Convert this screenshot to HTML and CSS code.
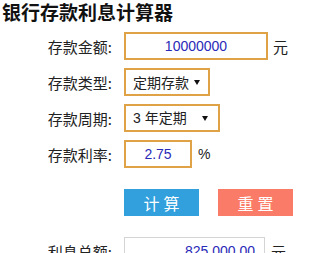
FILE: index.html
```html
<!DOCTYPE html>
<html lang="zh-CN">
<head>
<meta charset="utf-8">
<title>银行存款利息计算器</title>
<link rel="stylesheet" href="styles.css">
</head>
<body>
<div class="page">
  <h1 class="title">银行存款利息计算器</h1>
  <div class="row row-first">
    <label class="label">存款金额:</label>
    <input class="field amount" type="text" value="10000000">
    <span class="unit">元</span>
  </div>
  <div class="row">
    <label class="label">存款类型:</label>
    <div class="select type-select">
      <select><option>定期存款</option></select>
      <svg class="arrow" width="6" height="5" viewBox="0 0 6 5"><path d="M0 0H6L3 5Z"/></svg>
    </div>
  </div>
  <div class="row">
    <label class="label">存款周期:</label>
    <div class="select term-select">
      <select><option>3 年定期</option></select>
      <svg class="arrow" width="6" height="5" viewBox="0 0 6 5"><path d="M0 0H6L3 5Z"/></svg>
    </div>
  </div>
  <div class="row">
    <label class="label">存款利率:</label>
    <input class="field rate" type="text" value="2.75">
    <span class="unit unit-pct">%</span>
  </div>
  <div class="actions">
    <button class="btn btn-calc" type="button">计算</button>
    <button class="btn btn-reset" type="button">重置</button>
  </div>
  <div class="row row-result">
    <label class="label">利息总额:</label>
    <input class="result" type="text" value="825,000.00" readonly>
    <span class="unit">元</span>
  </div>
</div>
</body>
</html>
```

FILE: styles.css
```css
html, body {
  margin: 0;
  padding: 0;
  background: #ffffff;
}
body {
  font-family: "Microsoft YaHei", "Noto Sans CJK SC", "Noto Sans", sans-serif;
  color: #222222;
  overflow: hidden;
}
.page {
  padding-left: 2px;
}
.title {
  margin: 0;
  font-size: 19px;
  line-height: 24px;
  font-weight: bold;
  color: #111111;
}
.row {
  display: flex;
  align-items: center;
  height: 28px;
  margin-top: 8px;
}
.row-first {
  margin-top: 8px;
}
.label {
  width: 110px;
  text-align: right;
  font-size: 15px;
  color: #222222;
  margin-right: 12px;
}
.field {
  box-sizing: border-box;
  height: 28px;
  border: 2px solid #e0a247;
  padding: 0;
  outline: none;
  text-align: center;
  font-family: "Liberation Sans", Arial, sans-serif;
  font-size: 14px;
  color: #2a2ab8;
  background: #ffffff;
}
.amount {
  width: 144px;
}
.rate {
  width: 68px;
}
.unit {
  margin-left: 5px;
  font-size: 15px;
  color: #222222;
}
.unit-pct {
  margin-left: 6px;
  font-family: "Liberation Sans", Arial, sans-serif;
  font-size: 14px;
}
.select {
  box-sizing: border-box;
  height: 28px;
  border: 2px solid #e0a247;
  display: flex;
  align-items: center;
  background: #ffffff;
}
.select select {
  appearance: none;
  -webkit-appearance: none;
  border: 0;
  outline: none;
  background: transparent;
  flex: 1;
  min-width: 0;
  padding: 0 0 0 7px;
  font-family: "Microsoft YaHei", "Noto Sans CJK SC", sans-serif;
  font-size: 14px;
  color: #222222;
}
.term-select select {
  font-family: "Liberation Sans", "Noto Sans CJK SC", sans-serif;
}
.type-select {
  width: 86px;
}
.term-select {
  width: 96px;
}
.arrow {
  flex: none;
  fill: #111111;
}
.type-select .arrow {
  margin-right: 8px;
}
.term-select .arrow {
  margin-right: 10px;
}
.actions {
  display: flex;
  gap: 19px;
  margin-top: 21px;
  margin-left: 122px;
}
.btn {
  width: 75px;
  height: 27px;
  border: 0;
  padding: 0 0 0 4px;
  color: #ffffff;
  font-family: "Microsoft YaHei", "Noto Sans CJK SC", sans-serif;
  font-size: 16px;
  letter-spacing: 4px;
  text-align: center;
  cursor: pointer;
}
.btn-calc {
  background: #31a0dd;
}
.btn-reset {
  background: #fa7c68;
}
.row-result {
  margin-top: 21px;
}
.result {
  box-sizing: border-box;
  width: 141px;
  height: 28px;
  border: 1px solid #d4d4d4;
  padding: 0 9px 0 0;
  outline: none;
  text-align: right;
  font-family: "Liberation Sans", Arial, sans-serif;
  font-size: 14px;
  color: #2a2ab8;
  background: #ffffff;
}
.row-result .unit {
  margin-left: 6px;
}
```
